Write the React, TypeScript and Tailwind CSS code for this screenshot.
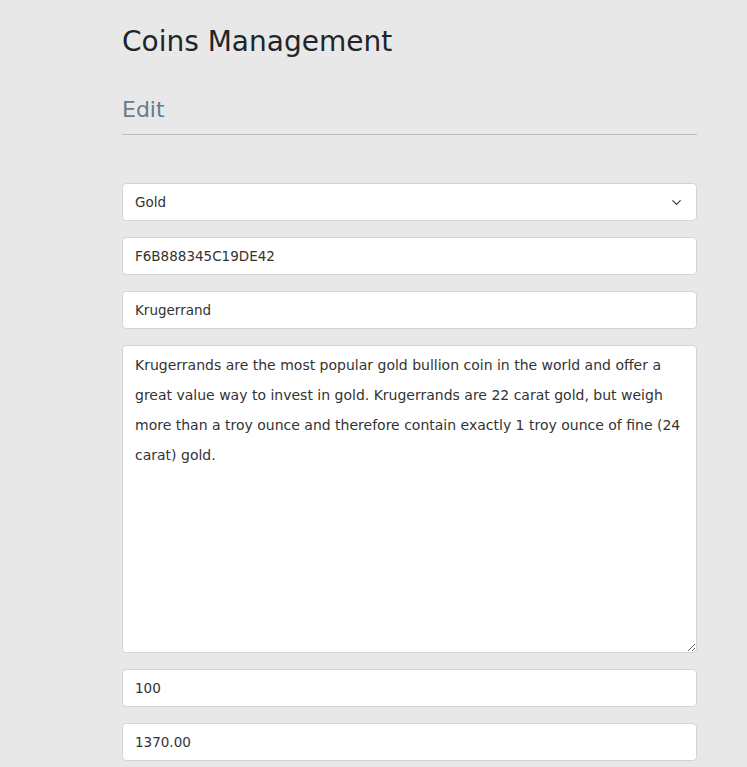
import { ChevronDown } from 'lucide-react';

const description =
  'Krugerrands are the most popular gold bullion coin in the world and offer a great value way to invest in gold. Krugerrands are 22 carat gold, but weigh more than a troy ounce and therefore contain exactly 1 troy ounce of fine (24 carat) gold.';

const inputCls =
  'block w-full h-[38px] rounded-[4px] border border-[#d4d4d4] bg-white px-[12px] text-[13.5px] text-[#333] outline-none';

export default function App() {
  return (
    <div className="min-h-screen bg-[#e8e8e8] font-['DejaVu_Sans',sans-serif]">
      <div className="w-[575px] ml-[122px]">
        <h1 className="pt-[22px] text-[28px] leading-[40px] text-[#212529]">Coins Management</h1>
        <h2 className="mt-[32px] text-[22px] leading-[32px] text-[#6c7a89] pb-[8px] border-b border-[#bdbdbd]">
          Edit
        </h2>

        <form className="mt-[48px] flex flex-col gap-[16px]">
          <div className="relative">
            <select defaultValue="Gold" className={inputCls + ' appearance-none'}>
              <option>Gold</option>
              <option>Silver</option>
              <option>Platinum</option>
            </select>
            <ChevronDown className="absolute right-[13px] top-[12px] w-[15px] h-[15px] text-[#333] pointer-events-none" strokeWidth={1.75} />
          </div>
          <input className={inputCls} defaultValue="F6B888345C19DE42" />
          <input className={inputCls} defaultValue="Krugerrand" />
          <textarea
            className="block w-full h-[308px] rounded-[4px] border border-[#d4d4d4] bg-white px-[12px] pt-[4px] text-[14px] leading-[30px] text-[#333] outline-none"
            defaultValue={description}
          />
          <input className={inputCls} defaultValue="100" />
          <input className={inputCls} defaultValue="1370.00" />
        </form>
      </div>
    </div>
  );
}
